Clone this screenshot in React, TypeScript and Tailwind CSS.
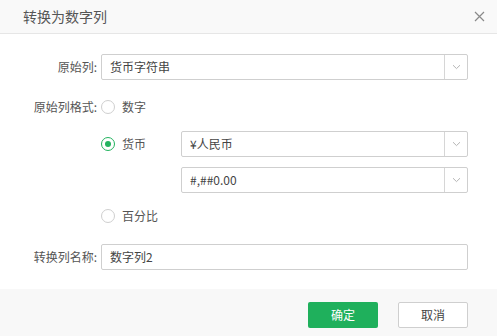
import React from "react";

const font = { fontFamily: '"Noto Sans CJK SC", "Noto Sans", sans-serif' };

function Chevron() {
  return (
    <svg width="9" height="6" viewBox="0 0 9 6" fill="none">
      <path d="M1 1.2 L4.5 4.6 L8 1.2" stroke="#b5b5b5" strokeWidth="1" />
    </svg>
  );
}

function Select({ value, className }: { value: string; className?: string }) {
  return (
    <div
      className={
        "flex h-[26px] items-stretch rounded-[2px] border border-[#cfcfcf] bg-white " +
        (className ?? "")
      }
    >
      <div className="flex flex-1 items-center pl-[8px] text-[12px] text-[#444]">{value}</div>
      <div className="flex w-[23px] items-center justify-center border-l border-[#d6d6d6]">
        <Chevron />
      </div>
    </div>
  );
}

function Radio({ checked, label }: { checked?: boolean; label: string }) {
  return (
    <div className="flex items-center">
      <div
        className={
          "flex h-[14px] w-[14px] items-center justify-center rounded-full border " +
          (checked ? "border-[#22b35e]" : "border-[#cfcfcf]")
        }
      >
        {checked && <div className="h-[6px] w-[6px] rounded-full bg-[#22b35e]" />}
      </div>
      <span className="ml-[7px] text-[12px] text-[#555]">{label}</span>
    </div>
  );
}

export default function App() {
  return (
    <div className="flex h-[336px] w-[497px] flex-col bg-white" style={font}>
      <div className="flex h-[34px] items-center justify-between border-b border-[#e6e6e6] bg-[#f9f9f9] pl-[23px] pr-[12px]">
        <span className="text-[14px] text-[#555]">转换为数字列</span>
        <svg width="11" height="11" viewBox="0 0 11 11">
          <path d="M1 1 L10 10 M10 1 L1 10" stroke="#8a8a8a" strokeWidth="1.2" />
        </svg>
      </div>

      <div className="flex flex-1 flex-col pt-[20px] pr-[29px]">
        <div className="flex items-center">
          <div className="w-[97px] text-right text-[12px] text-[#555]">原始列:</div>
          <Select value="货币字符串" className="ml-[4px] flex-1" />
        </div>

        <div className="mt-[14px] flex h-[26px] items-center">
          <div className="w-[97px] text-right text-[12px] text-[#555]">原始列格式:</div>
          <div className="ml-[4px]">
            <Radio label="数字" />
          </div>
        </div>

        <div className="mt-[11px] flex items-center">
          <div className="ml-[101px] w-[80px]">
            <Radio checked label="货币" />
          </div>
          <Select value="¥人民币" className="flex-1" />
        </div>

        <div className="mt-[10px] flex items-center">
          <Select value="#,##0.00" className="ml-[181px] flex-1" />
        </div>

        <div className="mt-[10px] flex h-[26px] items-center">
          <div className="ml-[101px]">
            <Radio label="百分比" />
          </div>
        </div>

        <div className="mt-[15px] flex items-center">
          <div className="w-[97px] text-right text-[12px] text-[#555]">转换列名称:</div>
          <div className="ml-[4px] flex h-[26px] flex-1 items-center rounded-[2px] border border-[#cfcfcf] pl-[8px] text-[12px] text-[#444]">
            数字列2
          </div>
        </div>
      </div>

      <div className="flex h-[47px] items-start justify-end gap-[20px] bg-[#f8f8f8] pt-[13px] pr-[29px]">
        <button className="flex h-[26px] w-[70px] items-center justify-center rounded-[2px] bg-[#1fb05c] text-[12px] text-white">
          确定
        </button>
        <button className="flex h-[26px] w-[70px] items-center justify-center rounded-[2px] border border-[#cfcfcf] bg-white text-[12px] text-[#444]">
          取消
        </button>
      </div>
    </div>
  );
}
